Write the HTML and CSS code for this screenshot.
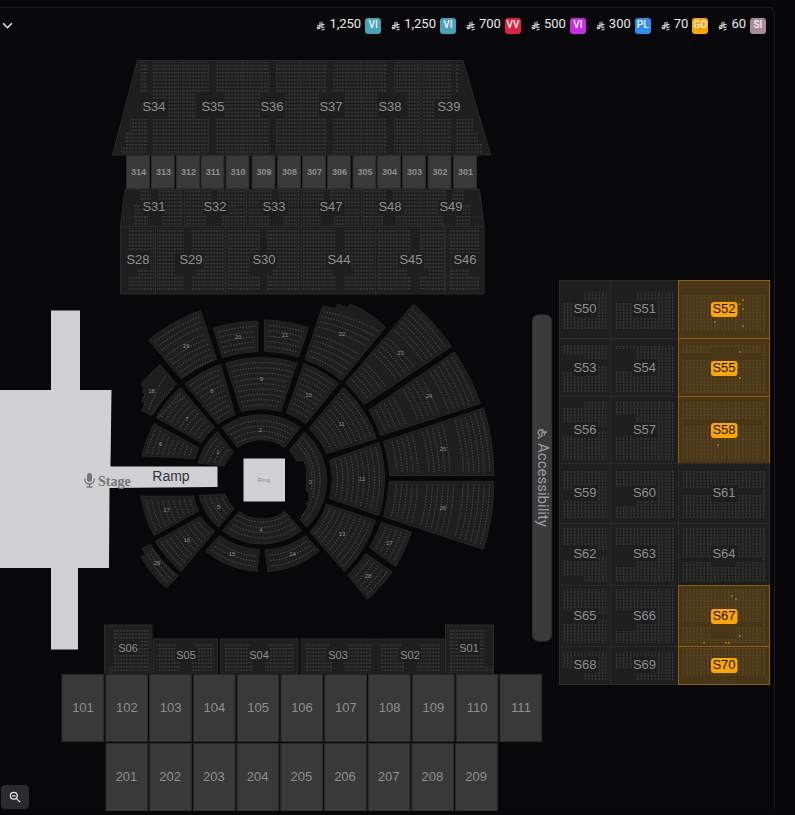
FILE: index.html
```html
<!DOCTYPE html>
<html lang="en">
<head>
<meta charset="utf-8">
<meta name="viewport" content="width=device-width, initial-scale=1">
<title>Seat map</title>
<link rel="stylesheet" href="styles.css">
</head>
<body>
<svg class="defs" aria-hidden="true">
  <symbol id="riyal" viewBox="0 0 9 10">
    <path d="M4 1v6.2L1 8M6 .6v6.6M1 4.9l7.6-1.6M.6 6.7l3.6-.8M5.8 6.6l2.8-.6M5.6 9l3-.7" fill="none" stroke="currentColor" stroke-width="1"/>
  </symbol>
</svg>
<main class="panel">
  <header class="bar">
    <button class="toggle" type="button" aria-label="Expand">
      <svg viewBox="0 0 10 6"><path d="M1 1l4 4 4-4" fill="none" stroke="currentColor" stroke-width="1.4"/></svg>
    </button>
    <ul class="prices">
      <li><svg class="riyal"><use href="#riyal"/></svg><span>1,250</span><b class="tag vip">VI</b></li>
      <li><svg class="riyal"><use href="#riyal"/></svg><span>1,250</span><b class="tag vip">VI</b></li>
      <li><svg class="riyal"><use href="#riyal"/></svg><span>700</span><b class="tag vvip">VV</b></li>
      <li><svg class="riyal"><use href="#riyal"/></svg><span>500</span><b class="tag violet">VI</b></li>
      <li><svg class="riyal"><use href="#riyal"/></svg><span>300</span><b class="tag platinum">PL</b></li>
      <li><svg class="riyal"><use href="#riyal"/></svg><span>70</span><b class="tag gold">GO</b></li>
      <li><svg class="riyal"><use href="#riyal"/></svg><span>60</span><b class="tag silver">SI</b></li>
    </ul>
  </header>
  <div class="map">
    <svg id="venue" class="venue" viewBox="0 40 774 771">
      <defs>
        <pattern id="rows" width="3" height="3.6" patternUnits="userSpaceOnUse"><rect class="seat" width="2.2" height="1.4"/></pattern>
        <pattern id="cols" width="3.5" height="3" patternUnits="userSpaceOnUse"><rect class="seat" width="1.4" height="2.2"/></pattern>
        <pattern id="goldcols" width="3.5" height="3" patternUnits="userSpaceOnUse"><rect class="gold-seat" width="1.4" height="2.2"/></pattern>
      </defs>
    </svg>
    <button class="zoom" type="button" aria-label="Zoom out">
      <svg viewBox="0 0 14 14"><g fill="none" stroke="currentColor" stroke-width="1.5"><circle cx="5.6" cy="5.6" r="4"/><path d="M8.6 8.6L13 13M3.6 5.6h4"/></g></svg>
    </button>
  </div>
</main>
<script src="map.js"></script>
</body>
</html>
```
FILE: styles.css
```css
* { box-sizing: border-box; }

body {
  margin: 0;
  background: #070709;
  color: #e8e8e8;
  font-family: Roboto, "Liberation Sans", sans-serif;
}

button {
  padding: 0;
  border: 0;
  background: none;
  color: inherit;
}

.defs {
  position: absolute;
  width: 0;
  height: 0;
}

.panel {
  margin: 7px 20px 4px 0;
  border: 1px solid #1b1b1e;
  border-left: 0;
  border-bottom: 0;
  border-top-right-radius: 6px;
  background: #08080a;
}

.bar {
  display: flex;
  justify-content: space-between;
  align-items: center;
  height: 32px;
  padding: 0 8px 0 2px;
}

.toggle {
  display: flex;
  padding: 2px 0 0;
}

.toggle svg {
  width: 11px;
  height: 7px;
}

.prices {
  display: flex;
  gap: 10px;
  margin: 0;
  padding: 4px 0 0;
  list-style: none;
}

.prices li {
  display: flex;
  align-items: center;
  font-size: 13px;
  line-height: 16px;
}

.prices span {
  margin: 0 4px 4px 4px;
}

.riyal {
  width: 9px;
  height: 10px;
}

.tag {
  width: 16px;
  height: 16px;
  border-radius: 3px;
  color: #f4f4f4;
  font-size: 10px;
  font-weight: 500;
  line-height: 13px;
  text-align: center;
}

.vip { background: #48a2b8; }
.vvip { background: #df2240; }
.violet { background: #c42fe6; }
.platinum { background: #2f8eed; }
.gold { background: #ffa500; }
.silver { background: #a88b97; }

.map {
  position: relative;
}

.venue {
  display: block;
  width: 100%;
  height: auto;
}

.zoom {
  position: absolute;
  left: 1px;
  bottom: 2px;
  display: flex;
  align-items: center;
  justify-content: center;
  width: 28px;
  height: 24px;
  border-radius: 4px;
  background: #2b2b2d;
}

.zoom svg {
  width: 12px;
  height: 12px;
}

.seat { fill: #383838; }
.gold-seat { fill: #5b4929; }
.section { fill: #1e1e1e; stroke: #2b2b2b; }
.cut { fill: #1e1e1e; }
.gold-cut { fill: #493617; }
.divider { fill: none; stroke: #2b2b2b; }
.wedge { fill: #1e1e1e; stroke: #252525; }
.arc { fill: none; stroke: #454545; stroke-width: 1.2; stroke-dasharray: 1.4 1.4; }
.box { fill: #393939; stroke: #2a2a2a; }
.available { fill: #493617; stroke: #8d5f0c; }
.pill { fill: #ffa500; }
.free { fill: #f09a00; }
.stage { fill: #d0d1d3; }
.access { fill: #3a3a3a; stroke: #323232; }

.label {
  fill: #8e8e8e;
  font-family: "Liberation Sans", sans-serif;
  font-size: 13px;
  text-anchor: middle;
}

.label.small { font-size: 11px; }
.label.mini { font-size: 9px; font-weight: bold; }
.label.tiny { font-size: 6px; }
.label.ramp { fill: #363636; font-size: 14px; }
.label.dark { fill: #161616; }
.label.ring { fill: #8a8a8a; font-size: 6px; }

.stage-label {
  fill: #777777;
  font-family: "Liberation Serif", serif;
  font-size: 14px;
  font-weight: bold;
}

.mic { fill: #777777; }
.mic-stand { fill: none; stroke: #777777; stroke-width: 1.3; }

.access-label {
  fill: #9b9b9b;
  font-family: Roboto, sans-serif;
  font-size: 15px;
}

.wheelchair { fill: none; stroke: #9b9b9b; stroke-width: 1.3; }
```
FILE: map.js
```js
const NS = "http://www.w3.org/2000/svg";
const venue = document.getElementById("venue");

function add(tag, attrs, text) {
  const el = document.createElementNS(NS, tag);
  for (const key in attrs) el.setAttribute(key, attrs[key]);
  if (text) el.textContent = text;
  venue.appendChild(el);
  return el;
}

// Rectangle from its left, top, right and bottom edges.
function box(cls, [l, t, r, b], extra) {
  add("rect", { class: cls, x: l, y: t, width: r - l, height: b - t, ...extra });
}

function seats(pattern, edges) {
  const [l, t, r, b] = edges;
  add("rect", { fill: `url(#${pattern})`, x: l, y: t, width: r - l, height: b - t });
}

function label(text, x, y, kind = "") {
  add("text", { class: `label ${kind}`.trim(), x, y }, text);
}

/* Upper stand */
add("path", { class: "section", d: "M137.500 60.500H463L490.500 155H112.500Z" });
[[141, 62, 147.5, 93], [152, 62, 181, 153], [183, 62, 209, 153], [216, 62, 242, 153], [243, 62, 269, 153],
 [276, 62, 300, 153], [301, 62, 327, 153], [333.5, 62, 360, 153], [361, 62, 387, 153], [394, 62, 419, 153],
 [423, 62, 451, 153], [456, 62, 459, 93], [130, 119, 147.5, 153], [125, 133, 130, 153], [121, 146, 125, 153],
 [456, 119, 473, 153], [473, 131, 478, 153], [478, 144, 482, 153]].forEach(b => seats("rows", b));
[[138, 100, 168, 118], [196, 93, 224, 118], [260, 93, 285, 118], [319, 93, 345, 118], [378, 93, 407, 118],
 [435, 100, 462, 118]].forEach(b => box("cut", b));
add("path", { class: "divider", d: "M182.500 61V155M242.500 61V155M300.500 61V155M360.500 61V155M420.500 61V155" });
[["S34", 154], ["S35", 213], ["S36", 272], ["S37", 331], ["S38", 390], ["S39", 449]].forEach(([n, x]) => label(n, x, 111));

/* Boxes 314 to 301 */
[126.5, 151.5, 176.5, 201, 226, 252, 277.5, 302.500, 327.5, 353, 377.5, 402.5, 428, 453.5].forEach((x, i) => {
  box("box", [x, 155.5, x + 23, 188.5]);
  label(String(314 - i), x + 12, 175, "mini");
});

/* Middle stand */
add("path", { class: "section", d: "M125 189.500H479.500L484 226.500H120.500Z" });
[[140, 191, 183, 205], [134, 204, 183, 225], [122, 217, 148, 219], [186, 191, 245, 225], [248, 191, 300, 225],
 [303, 191, 360, 225], [363, 191, 419, 225], [421, 191, 464, 205], [421, 204, 470, 225], [470, 217, 482, 219]]
  .forEach(b => seats("rows", b));
[[151, 190, 158, 200], [148, 216, 162, 226], [211, 190, 217, 200], [207, 216, 221, 226], [273, 190, 279, 200],
 [269, 216, 283, 226], [324, 190, 330, 200], [321, 216, 334, 226], [386, 190, 392, 200], [383, 216, 396, 226],
 [446, 190, 452, 200], [443, 216, 456, 226], [235, 206, 260, 208], [285, 206, 320, 208], [342, 206, 359, 208],
 [141, 200, 165, 214], [203, 200, 228, 214], [261, 200, 287, 214], [319, 200, 344, 214], [377, 200, 403, 214],
 [438, 200, 463, 214]].forEach(b => box("cut", b));
add("path", { class: "divider", d: "M184.500 190V226M246.500 190V226M301.500 190V226M361.500 190V226M420.500 190V226" });
[["S31", 154], ["S32", 215], ["S33", 274], ["S47", 331], ["S48", 390], ["S49", 451]].forEach(([n, x]) => label(n, x, 211));

/* Lower stand */
box("section", [120.5, 226.5, 484, 294]);
[[128, 228, 154, 291], [157, 228, 184, 291], [191, 228, 224, 291], [227, 228, 260, 291], [267, 228, 300, 291],
 [303, 228, 336, 291], [344, 228, 374, 291], [377, 228, 411, 291], [419, 228, 445, 291], [449, 228, 479, 291]]
  .forEach(b => seats("rows", b));
[[126, 252, 151, 268], [126, 268, 137, 276], [175, 253, 204, 268], [175, 268, 196, 275], [250, 253, 277, 268],
 [250, 268, 272, 275], [326, 253, 351, 268], [332, 268, 353, 275], [398, 253, 424, 268], [407, 268, 428, 275],
 [451, 253, 478, 268], [469, 268, 480, 276]].forEach(b => box("cut", b));
add("path", { class: "divider", d: "M155.500 227V294M225.500 227V294M301.500 227V294M375.500 227V294M445.500 227V294" });
[["S28", 138], ["S29", 191], ["S30", 264], ["S44", 339], ["S45", 411], ["S46", 465]].forEach(([n, x]) => label(n, x, 264));

/* Side stand */
const sideX = [559.5, 610.5, 678.5, 769.5];
const sideY = [280.5, 338.5, 396.5, 463.5, 523.5, 585.5, 646.5, 684.5];
const sideLabelY = [313, 372, 434, 497, 558, 620, 669];
const sideSeats = [
  [[303, 329], [303, 329], [295, 331]],
  [[345, 393], [346, 393], [345, 393]],
  [[401, 460], [401, 460], [401, 460]],
  [[471, 518], [471, 518], [471, 518]],
  [[528, 582], [528, 582], [528, 582]],
  [[589, 643], [589, 643], [589, 643]],
  [[652, 668], [652, 668], [648, 676]]
];
const sideSpan = [[563, 608], [615, 674], [682.5, 765]];
for (let r = 0; r < 7; r++) {
  for (let c = 0; c < 3; c++) {
    const open = c === 2 && ![3, 4].includes(r);
    box(open ? "available" : "section", [sideX[c], sideY[r], sideX[c + 1], sideY[r + 1]]);
    seats(open ? "goldcols" : "cols", [sideSpan[c][0], sideSeats[r][c][0], sideSpan[c][1], sideSeats[r][c][1]]);
  }
}
[[584, 292, 608, 303], [636, 292, 674, 303], [584, 668, 608, 680], [636, 668, 674, 680]].forEach(b => seats("cols", b));
[[563, 355, 584, 371], [598, 360, 608, 366], [615, 349, 636, 371], [563, 401, 584, 407], [563, 422, 598, 436],
 [598, 427, 608, 431], [615, 415, 636, 436], [563, 490, 584, 501], [615, 487, 636, 506],
 [563, 545, 598, 560], [598, 550, 608, 556], [563, 576, 584, 583], [615, 545, 636, 567], [563, 610, 598, 624],
 [598, 614, 608, 619], [615, 610, 636, 631], [682, 488, 762, 495], [682, 558, 762, 562], [711, 558, 736, 567]]
  .forEach(b => box("cut", b));
[[573, 301, 598, 317], [573, 360, 598, 376], [573, 422, 598, 438], [573, 485, 598, 501], [573, 546, 598, 561],
 [573, 608, 598, 624], [573, 657, 598, 673]].forEach(([l, t, r, b]) => {
  box("cut", [l, t, r, b]);
  box("cut", [l + 59, t, r + 60, b]);
});
[[711, 485, 737, 502], [711, 546, 737, 562]].forEach(b => box("cut", b));
[[682, 353, 762, 360], [711, 348, 737, 360], [682, 420, 762, 425], [682, 622, 762, 627], [711, 622, 736, 638]]
  .forEach(b => box("gold-cut", b));
for (let r = 0; r < 7; r++) {
  const y = sideLabelY[r];
  const open = r !== 3 && r !== 4;
  label("S" + (50 + r * 3), 585, y);
  label("S" + (51 + r * 3), 644.5, y);
  if (open) box("pill", [711, y - 11, 737.5, y + 4], { rx: 3 });
  label("S" + (52 + r * 3), 724, y, open ? "dark" : "");
}
[[743, 300], [740, 304], [743, 309], [715, 322], [743, 326], [740, 352], [740, 378], [718, 445], [732, 596],
 [736, 599], [740, 636], [704, 643], [726, 643], [729, 643]]
  .forEach(([x, y]) => box("free", [x - 0.7, y - 0.7, x + 0.7, y + 0.7]));

/* Floor: every wedge runs round the ring, outer edge a-b and inner edge c-d */
const CX = 261.5, CY = 480;
const radius = p => Math.hypot(p[0] - CX, p[1] - CY).toFixed(1);
const mix = (p, q, t) => [p[0] + (q[0] - p[0]) * t, p[1] + (q[1] - p[1]) * t];
const arcTo = (from, to, sweep) => `A${radius(from)} ${radius(from)} 0 0 ${sweep} ${to[0]} ${to[1]}`;

function wedge(name, a, b, c, d, groups, labelAt, outline) {
  add("path", {
    class: "wedge",
    d: outline || `M${a[0]} ${a[1]}${arcTo(a, b, 1)}L${c[0]} ${c[1]}${arcTo(c, d, 0)}Z`
  });
  const depth = Math.hypot(a[0] - d[0], a[1] - d[1]);
  groups.forEach(([start, count]) => {
    for (let i = 0; i < count; i++) {
      const t = (start + i * 5.3) / depth;
      const l = mix(a, d, t), r = mix(b, c, t);
      const w = Math.hypot(l[0] - r[0], l[1] - r[1]);
      const p = mix(l, r, 3 / w), q = mix(l, r, 1 - 3 / w);
      const R = radius(l);
      add("path", { class: "arc", d: `M${p[0]} ${p[1]}A${R} ${R} 0 0 1 ${q[0]} ${q[1]}` });
    }
  });
  label(name, labelAt[0], labelAt[1] + 2, "tiny");
}

wedge("1", [198, 463], [217.5, 431.5], [233.5, 452.5], [224, 466], [[4, 4]], [218, 452]);
wedge("2", [222, 427.5], [300, 427.5], [284.5, 447.5], [237.5, 447.5], [[4, 4]], [260.5, 430]);
wedge("3", [304.5, 432], [306.5, 527.5], [290, 510], [289, 450], [[3.5, 2]], [310.5, 482],
  "M304.500 432A65 65 0 0 1 306.500 527.500L300 519.500L309 508L306 503L309 501V493L306.500 491V468L303.500 460L296.500 461L289.500 450Z");
add("path", { class: "arc", d: "M297 444.500A50.500 50.500 0 0 1 311 490.500" });
wedge("4", [301.5, 530.5], [222.5, 530.5], [239, 511.5], [285, 511.5], [[4, 4]], [261, 530]);
wedge("5", [218.5, 527.5], [199, 495.5], [225, 494], [234, 508.5], [[4, 4]], [218.5, 507]);
wedge("6", [142, 456], [154, 423.5], [199, 448], [195, 458.5], [[4, 9]], [160.5, 444]);
wedge("7", [156, 417.5], [180.5, 387.5], [214.5, 427.5], [201.5, 442.5], [[4, 9]], [187, 419]);
wedge("8", [185, 384], [220.5, 364.5], [235, 414.5], [218, 424], [[4, 9]], [212, 391]);
wedge("9", [225.5, 363], [297, 363], [280.5, 411.5], [241.5, 411.5], [[4, 9]], [261.5, 379]);
wedge("10", [304, 363.5], [338.5, 383.5], [306, 423.5], [286.5, 413], [[4, 9]], [308.5, 395]);
wedge("11", [343.5, 387.5], [376.5, 438.5], [326.5, 453.5], [309, 428.5], [[4, 9]], [341.5, 424]);
wedge("12", [379, 442.5], [379, 515.5], [329.5, 498.5], [329.5, 460], [[4, 9]], [362, 479]);
wedge("13", [375.5, 520.5], [344.5, 571.5], [310, 532], [326.5, 504], [[4, 9]], [342, 534]);
wedge("14", [319.5, 551], [268, 571.5], [265, 550], [305.5, 535.5], [[4, 3]], [292.5, 554]);
wedge("15", [257, 571.5], [205.5, 551], [219.5, 535.5], [259.5, 549.5], [[4, 3]], [232, 554]);
wedge("16", [181, 571.5], [155.5, 541.5], [200.5, 516.5], [214.5, 531.5], [[4, 9]], [187, 540]);
wedge("17", [154, 535.5], [141, 496], [193.5, 496], [198.5, 511], [[4, 9]], [166.5, 510]);
wedge("18", [145, 409], [160, 364.5], [176.5, 384], [151.5, 415.5], [[4, 3]], [151.5, 391],
  "M160 364.500L176.500 384Q161 397 151.500 415.500L141.500 410.500L145 404L141.500 401L145 395L142 391.500L144 388.500L141 384Q150 373 160 364.500Z");
wedge("19", [148.5, 340], [200.5, 310.5], [216.5, 359.5], [181.5, 379], [[5, 3], [23, 6]], [186, 346]);
wedge("20", [213.5, 328], [258, 321], [258, 351.5], [222.5, 357.5], [[5, 5]], [238, 337]);
wedge("21", [264.5, 320], [308.5, 327.5], [298.5, 357], [264.5, 351], [[5, 5]], [285, 335]);
wedge("22", [322.5, 306], [385.5, 327.5], [341.5, 380.5], [305, 359.5], [[5, 4], [30, 5]], [342, 334],
  "M322.500 306L335 308.500L337.500 304.500L346.500 307.500L350.500 304Q370 312 385.500 327.500L341.500 380.500Q326 367 305 359.500Z");
wedge("23", [413.5, 304], [451.5, 346.5], [364, 404.5], [345.5, 383], [[5, 6], [42, 5], [76, 5]], [400.5, 353]);
wedge("24", [454.5, 352], [480.5, 403.5], [380.5, 435.5], [369, 410], [[5, 6], [42, 5], [76, 5]], [429, 396]);
wedge("25", [483.5, 408], [494, 475.5], [389.5, 475.5], [383.5, 441.5], [[4, 6], [44, 5], [76, 5]], [443, 449]);
wedge("26", [494, 481.5], [483.5, 549.5], [383.5, 516.5], [389, 481.5], [[4, 6], [40, 6], [76, 5]], [443, 508]);
wedge("27", [411.5, 532], [395.5, 566.5], [369.5, 547.5], [381.5, 522.5], [[4, 5]], [389.5, 543]);
wedge("28", [392, 572], [367.5, 599.5], [347.5, 575], [366, 553.5], [[4, 5]], [368, 576]);
wedge("29", [166.5, 588], [144, 553], [150.5, 544.5], [178.5, 575.5], [[4, 3]], [157, 563],
  "M150.500 544.500Q162 563 178.500 575.500L166.500 588Q152 576 141 556.500L145.500 555.500L142.500 548Z");

/* Ring, stage and ramp */
box("stage", [243.5, 458.5, 285, 501.5]);
label("Ring", 264, 482, "ring");
add("path", { class: "stage", d: "M0 390H51V310.500H80V390H111.500L110.500 466.500H217.500V487L109.500 488L109 568H78V649.500H51V568H0Z" });
add("rect", { class: "mic", x: 87, y: 473, width: 5, height: 9, rx: 2.5 });
add("path", { class: "mic-stand", d: "M84.700 478.500Q84.700 484 89.500 484T94.300 478.500M89.500 484V487M86.500 487H92.500" });
add("text", { class: "stage-label", x: 98, y: 486 }, "Stage");
label("Ramp", 171, 481, "ramp");

/* Accessible platform */
box("access", [532.5, 315, 551.5, 641], { rx: 6 });
add("text", { class: "access-label", transform: "translate(538 443) rotate(90)" }, "Accessibility");
add("path", {
  class: "wheelchair",
  transform: "translate(548 428) rotate(90)",
  d: "M4 1V6H8L9.500 9.500L11 9M4 3.500H7.500M2.800 4.500A3 3 0 1 0 7.500 8"
});

/* Near stand */
[["S06", [104.5, 625, 152, 673], 128, 652], ["S05", [153.5, 639, 217.5, 673], 186, 659],
 ["S04", [220.5, 639, 298, 673], 259, 659], ["S03", [301, 639, 375, 673], 338, 659],
 ["S02", [377, 639, 444, 673], 410, 659], ["S01", [445.5, 625, 493.5, 673], 469, 652]].forEach(([name, edges, x, y]) => {
  box("section", edges);
  const [l, t, r, b] = edges;
  if (name === "S06") {
    seats("rows", [l + 9, t + 4, r - 3, b - 6]);
    seats("rows", [l + 2, b - 6, r - 3, b - 2]);
  } else if (name === "S01") {
    seats("rows", [l + 4, t + 4, r - 9, b - 6]);
    seats("rows", [l + 4, b - 6, r, b - 2]);
  } else {
    seats("rows", [l + 4, t + 4, r - 4, b - 2]);
    box("cut", [x - 9, t + 2, x + 9, t + 10]);
    box("cut", [x - 6, b - 12, x + 6, b - 1]);
  }
  box("cut", [x - 11, y - 11, x + 11, y + 3]);
  label(name, x, y, "small");
});

/* Boxes 101 to 111 and 201 to 209 */
for (let i = 0; i < 11; i++) {
  const x = 62 + i * 43.8;
  box("box", [x, 674.5, x + 41.7, 741.5]);
  label(String(101 + i), x + 21, 712);
}
for (let i = 0; i < 9; i++) {
  const x = 106 + i * 43.7;
  box("box", [x, 743.5, x + 41.7, 811]);
  label(String(201 + i), x + 20.5, 781);
}
```
